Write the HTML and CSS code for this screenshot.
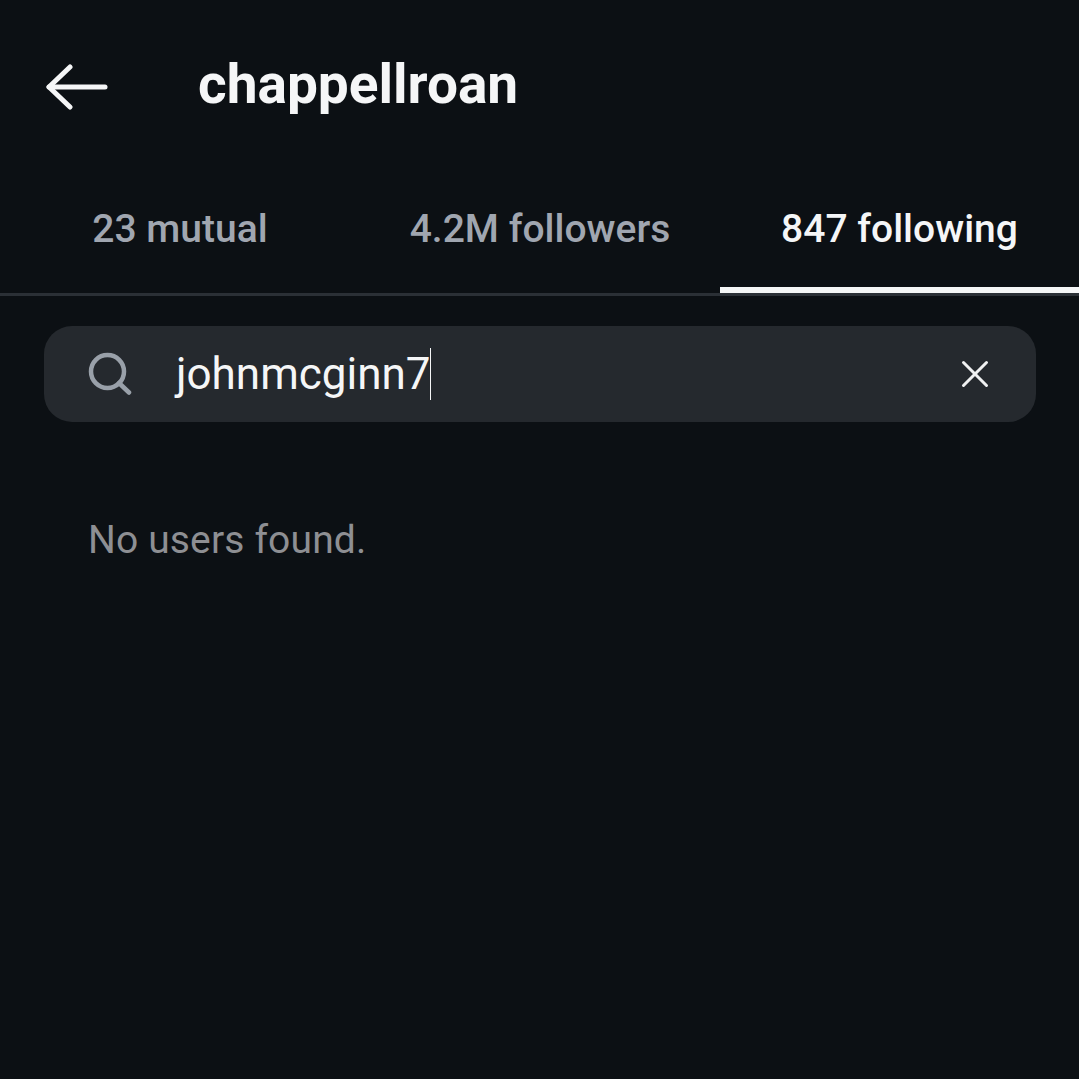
FILE: index.html
```html
<!DOCTYPE html>
<html lang="en">
<head>
  <meta charset="UTF-8" />
  <title>chappellroan</title>
  <link rel="stylesheet" href="styles.css">
</head>
<body>
  <header class="top">
    <svg class="back" width="62" height="46" viewBox="0 0 62 46" fill="none" stroke="#f5f6f7" stroke-width="5" stroke-linecap="round" stroke-linejoin="round">
      <path d="M3 23H59"/>
      <path d="M24 3L3 23L24 43"/>
    </svg>
    <h1>chappellroan</h1>
  </header>

  <nav class="tabs">
    <div class="tab">23 mutual</div>
    <div class="tab">4.2M followers</div>
    <div class="tab active">847 following</div>
  </nav>

  <div class="search">
    <svg class="search-icon" width="44" height="44" viewBox="0 0 44 44" fill="none" stroke="#99a0a9" stroke-width="4.5" stroke-linecap="round">
      <circle cx="19.5" cy="19.5" r="16.5"/>
      <path d="M31 31L41 40.5"/>
    </svg>
    <div class="query">johnmcginn7<span class="caret"></span></div>
    <svg class="clear" width="28" height="28" viewBox="0 0 28 28" fill="none" stroke="#f0f1f2" stroke-width="3" stroke-linecap="round">
      <path d="M2.5 2.5L25.5 25.5"/>
      <path d="M25.5 2.5L2.5 25.5"/>
    </svg>
  </div>

  <p class="empty">No users found.</p>
</body>
</html>
```

FILE: styles.css
```css
body {
  margin: 0;
  height: 1079px;
  overflow: hidden;
  background: #0c1014;
  font-family: Roboto, sans-serif;
  color: #f5f6f7;
}

.top {
  display: flex;
  align-items: center;
  height: 170px;
  padding-left: 46px;
  box-sizing: border-box;
}

.back {
  flex: none;
  margin-right: 90px;
  margin-top: 4px;
}

h1 {
  margin: -2px 0 0;
  font-size: 55px;
  font-weight: 700;
}

.tabs {
  display: grid;
  grid-template-columns: 360px 360px 359px;
  height: 126px;
  box-sizing: border-box;
  border-bottom: 3px solid #2b3036;
}

.tab {
  display: flex;
  align-items: center;
  justify-content: center;
  padding-bottom: 6px;
  font-size: 39px;
  font-weight: 500;
  color: #a0a6b0;
}

.tab.active {
  padding-bottom: 0;
  color: #f5f6f7;
  border-bottom: 6px solid #f5f6f7;
}

.search {
  display: flex;
  align-items: center;
  height: 96px;
  margin: 30px 43px 0 44px;
  padding: 0 47px 0 44px;
  border-radius: 28px;
  background: #25292e;
}

.search-icon {
  flex: none;
  margin-right: 44px;
}

.query {
  flex: 1;
  display: flex;
  align-items: center;
  font-size: 44px;
}

.caret {
  width: 1px;
  height: 52px;
  margin-left: -1px;
  background: #f5f6f7;
}

.clear {
  flex: none;
}

.empty {
  margin: 94px 0 0 88px;
  font-size: 39px;
  line-height: 48px;
  letter-spacing: 0.15px;
  color: #8e8f93;
}
```
